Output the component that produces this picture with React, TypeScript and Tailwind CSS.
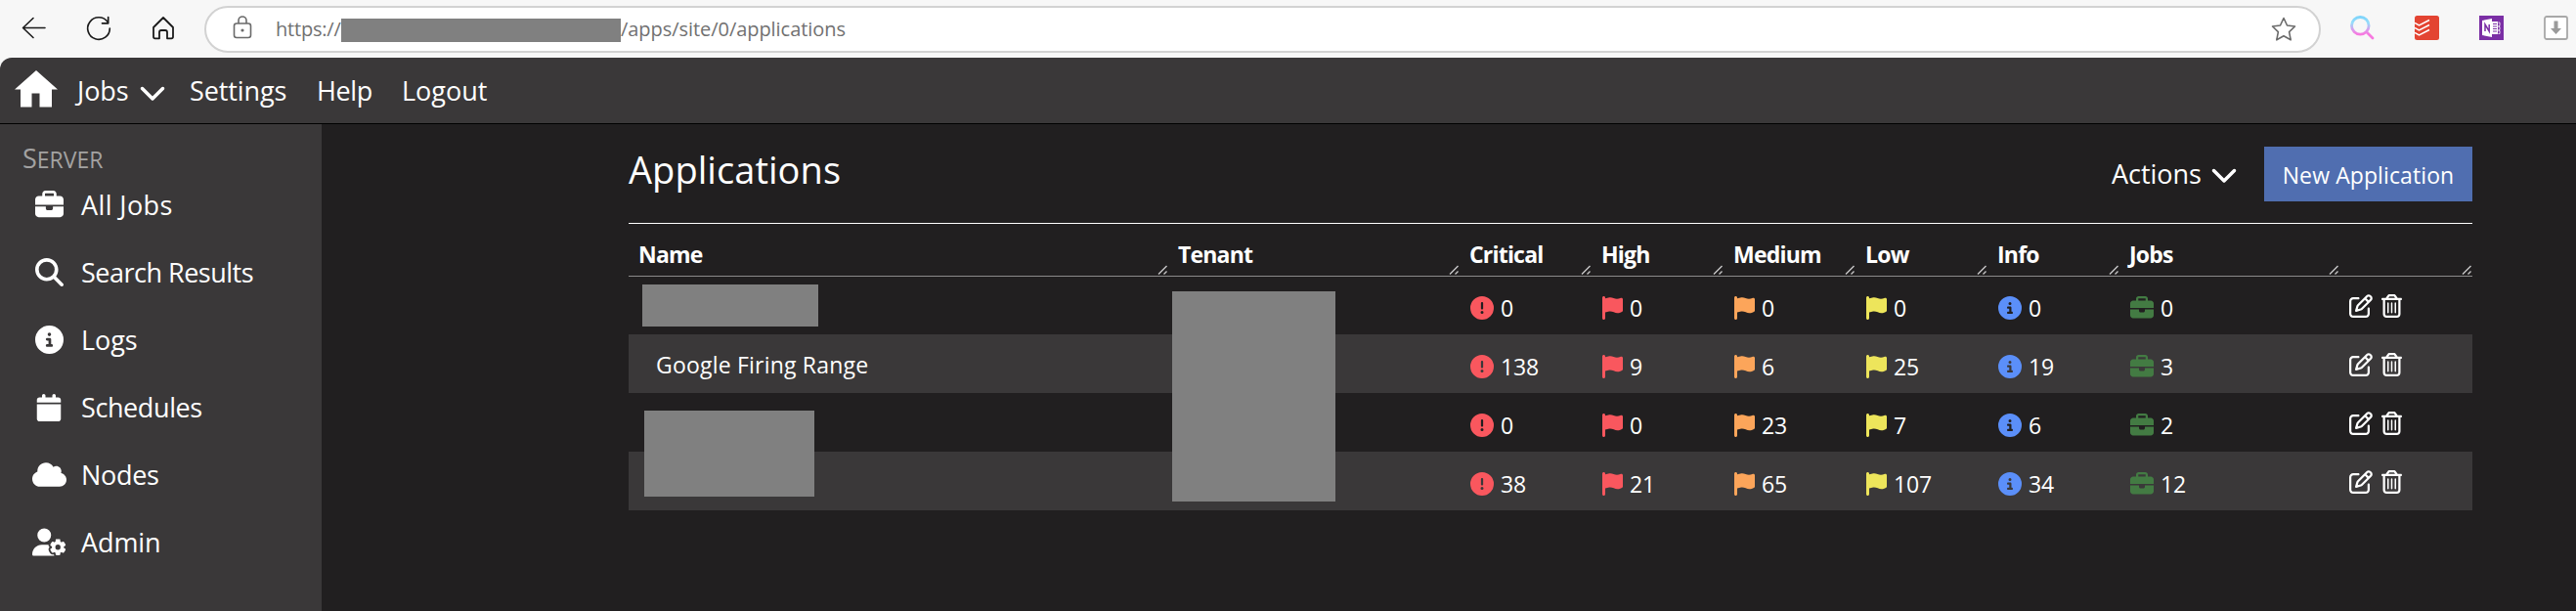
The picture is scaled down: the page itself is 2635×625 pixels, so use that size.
import {
  FaBriefcase,
  FaCalendar,
  FaChevronDown,
  FaCircleExclamation,
  FaCircleInfo,
  FaCloud,
  FaFlag,
  FaMagnifyingGlass,
  FaRegPenToSquare,
  FaRegTrashCan,
  FaUserGear,
} from 'react-icons/fa6';

const links = [
  { label: 'All Jobs', icon: FaBriefcase, size: 'size-[29px]', text: 'tracking-[0.4px]' },
  { label: 'Search Results', icon: FaMagnifyingGlass, size: 'size-[29px]', text: 'tracking-[-0.5px]' },
  { label: 'Logs', icon: FaCircleInfo, size: 'size-[29px]', text: 'tracking-[-0.1px]' },
  { label: 'Schedules', icon: FaCalendar, size: 'size-[28px]', text: 'tracking-[-0.4px]' },
  { label: 'Nodes', icon: FaCloud, size: 'size-[35px]', text: 'tracking-[-0.3px]' },
  { label: 'Admin', icon: FaUserGear, size: 'size-[35px]', text: 'tracking-[-0.1px]' },
];

const columns = ['Name', 'Tenant', 'Critical', 'High', 'Medium', 'Low', 'Info', 'Jobs', ''];

const rows = [
  { name: '', critical: 0, high: 0, medium: 0, low: 0, info: 0, jobs: 0 },
  { name: 'Google Firing Range', critical: 138, high: 9, medium: 6, low: 25, info: 19, jobs: 3 },
  { name: '', critical: 0, high: 0, medium: 23, low: 7, info: 6, jobs: 2 },
  { name: '', critical: 38, high: 21, medium: 65, low: 107, info: 34, jobs: 12 },
];

const grid = 'grid grid-cols-[552px_298px_135px_135px_135px_135px_135px_225px_136px]';
const cell = 'flex items-center gap-[7px] pt-[6px] pl-[11px] tracking-[-0.2px]';

function BrowserBar() {
  return (
    <div className="flex h-[59px] items-center bg-[#f7f7f7]">
      <svg className="ml-[21px] size-7" viewBox="0 0 28 28" fill="none" stroke="#1b1b1b" strokeWidth="1.6" strokeLinecap="round" strokeLinejoin="round">
        <path d="M25 12.500H2.500M13 2.500L2.500 12.500L13 22.500" />
      </svg>
      <svg className="ml-[38px] size-7" viewBox="0 0 28 28" fill="none" stroke="#1b1b1b" strokeWidth="1.700" strokeLinecap="round" strokeLinejoin="round">
        <path d="M23.200 6.500A11.300 11.300 0 1 0 25.300 13M23.700 1.500V7.800H17.500" />
      </svg>
      <svg className="ml-[38px] size-7" viewBox="0 0 28 28" fill="none" stroke="#1b1b1b" strokeWidth="1.800" strokeLinejoin="round">
        <path d="M4 12L14 2L24 12V21.500Q24 23.300 22.200 23.300H18V17Q18 15 16 15H12Q10 15 10 17V23.300H5.800Q4 23.300 4 21.500Z" />
      </svg>
      <div className="ml-[28px] flex h-[48px] w-[2165px] items-center rounded-full border-2 border-[#d2d2d2] bg-white text-[20px] text-[#717171]">
        <svg className="mb-[3px] ml-[25px] size-6" viewBox="0 0 24 24" fill="none" stroke="#6a6a6a" strokeWidth="1.600">
          <rect x="3.500" y="8" width="17" height="14.500" rx="2.500" />
          <path d="M8 8V5a4 4 0 0 1 8 0V8" />
          <circle cx="12" cy="15" r="0.800" fill="#6a6a6a" />
        </svg>
        <span className="ml-[22px] w-[67px] tracking-[-0.2px]">https://</span>
        <div className="mt-[3px] h-6 w-[286px] bg-[#808080]" />
        <span className="tracking-[-0.05px]">/apps/site/0/applications</span>
        <svg className="mr-[22px] ml-auto size-7" viewBox="0 0 28 28" fill="none" stroke="#6a6a6a" strokeWidth="1.600" strokeLinejoin="round">
          <path d="M14 2.500L17.500 10L25.500 11L19.600 16.600L21.200 24.800L14 20.800L6.800 24.800L8.400 16.600L2.500 11L10.500 10Z" />
        </svg>
      </div>
      <svg className="mb-[2px] ml-[30px] size-[25px]" viewBox="0 0 25 25" fill="none" stroke="url(#lens)" strokeWidth="2.800" strokeLinecap="round">
        <defs>
          <linearGradient id="lens" x1="0" y1="0" x2="0" y2="25" gradientUnits="userSpaceOnUse">
            <stop offset="0" stopColor="#7ad3fb" />
            <stop offset="0.300" stopColor="#96ddfb" />
            <stop offset="0.550" stopColor="#d3a2ee" />
            <stop offset="0.750" stopColor="#f779e0" />
            <stop offset="1" stopColor="#f779e0" />
          </linearGradient>
        </defs>
        <circle cx="10.300" cy="10.300" r="8.800" />
        <path d="M17 17L23 23" />
      </svg>
      <svg className="mb-[2px] ml-[41px] size-[25px]" viewBox="0 0 25 25" fill="none" stroke="#fff" strokeWidth="1.500">
        <rect width="25" height="25" rx="2.500" fill="#e34432" stroke="none" />
        <path d="M0 7.500L4.500 10L15 4.500M0 12.500L4.500 15L15 9.500M0 17.500L4.500 20L15 14.500" />
      </svg>
      <svg className="mb-[2px] ml-[41px] size-[25px]" viewBox="0 0 25 25" fill="none">
        <rect width="25" height="25" fill="#7b2fa5" />
        <path d="M3 5L13 3V22L3 20Z" fill="#fff" />
        <path d="M6 16V9L10.200 16V9" stroke="#7b2fa5" strokeWidth="1.500" />
        <path d="M13 6H19V19H13Z" fill="#fff" />
        <path d="M14 8.500H18M14 11H18M14 13.500H18M14 16H18" stroke="#7b2fa5" strokeWidth="1" />
        <path d="M19.500 7H21V10.500H19.500M19.500 11.500H21V14.500H19.500M19.500 15.500H21V18.500H19.500" stroke="#fff" strokeWidth="0.800" />
      </svg>
      <svg className="mb-[2px] ml-[41px] size-[25px]" viewBox="0 0 25 25" fill="none">
        <rect x="1" y="1" width="23" height="23" rx="2" fill="#fff" stroke="#a8a8a8" strokeWidth="1.800" />
        <path d="M10.500 5.500H14.500V13H18L12.500 19L7 13H10.500Z" fill="#9a9a9a" />
      </svg>
    </div>
  );
}

function Navbar() {
  return (
    <nav className="flex h-[68px] items-center rounded-tl-xl border-b border-black bg-[#3a3839] pt-[2px] text-[27px] text-white">
      <svg className="mb-[5px] ml-[15px] h-[38px] w-11" viewBox="0 0 44 38" fill="#fff">
        <path d="M22 0L44 19.500H38V37.500H25.500V23.500H17.500V37.500H6V19.500H0Z" />
      </svg>
      <span className="ml-[20px] w-[57px] tracking-[-0.1px]">Jobs</span>
      <FaChevronDown className="ml-[6px] size-7" />
      <span className="ml-[24px] w-[107px] tracking-[-0.1px]">Settings</span>
      <span className="ml-[23px] w-[62px] tracking-[-0.4px]">Help</span>
      <span className="ml-[25px]">Logout</span>
    </nav>
  );
}

function Sidebar() {
  return (
    <aside className="w-[329px] bg-[#3a3839] pt-[18px] text-[27px] text-white">
      <h2 className="h-[31px] pl-[23px] leading-[34px] text-[#a3a2a2]">
        S<span className="text-[23px]">ERVER</span>
      </h2>
      <ul>
        {links.map(({ label, icon: Icon, size, text }) => (
          <li key={label} className="flex h-[69px] items-center">
            <span className="mb-[2px] ml-[32px] flex w-9 justify-center">
              <Icon className={size} />
            </span>
            <span className={`ml-[15px] ${text}`}>{label}</span>
          </li>
        ))}
      </ul>
    </aside>
  );
}

// resize handle in the corner of a header cell
function Grip() {
  return (
    <svg className="absolute right-px bottom-px size-[10px]" viewBox="0 0 10 10" stroke="#c8c8c8" strokeWidth="1.400">
      <path d="M1 9.500L9.500 1M6.500 9.500L9.500 6.500" />
    </svg>
  );
}

export default function App() {
  return (
    <div className="flex h-[625px] w-[2635px] flex-col overflow-hidden bg-[#f7f7f7] font-['Open_Sans',sans-serif]">
      <BrowserBar />
      <Navbar />
      <div className="flex flex-1 bg-[#211f20]">
        <Sidebar />
        <main className="ml-[314px] w-[1886px] text-white">
          <div className="flex h-[102px] items-center border-b border-white">
            <h1 className="mb-[8px] text-[38px] tracking-[0.05px]">Applications</h1>
            <span className="mt-[2px] ml-auto text-[27px]">Actions</span>
            <FaChevronDown className="ml-[9px] size-7" />
            <button className="ml-[27px] h-14 w-[213px] bg-[#506eb0] pt-[3px] text-[23px] tracking-[0.1px]">
              New Application
            </button>
          </div>
          <div className={`${grid} h-[54px] border-b border-[#8b8a8a] text-[23px] font-bold`}>
            {columns.map((name, i) => (
              <div key={i} className="relative flex items-center pt-[10px] pl-[10px] tracking-[-0.8px]">
                {name}
                <Grip />
              </div>
            ))}
          </div>
          <div className="relative -mt-px text-[23px]">
            {rows.map((row, i) => (
              <div key={i} className={`${grid} h-[60px] items-center even:bg-[#3a3839]`}>
                <div className="pt-[3px] pl-[28px] tracking-[0.2px]">{row.name}</div>
                <div />
                <div className={cell}>
                  <FaCircleExclamation className="size-6 text-[#f9575e]" />
                  {row.critical}
                </div>
                <div className={cell}>
                  <FaFlag className="h-6 w-[21px] text-[#f9575e]" />
                  {row.high}
                </div>
                <div className={cell}>
                  <FaFlag className="h-6 w-[21px] text-[#fca55a]" />
                  {row.medium}
                </div>
                <div className={cell}>
                  <FaFlag className="h-6 w-[21px] text-[#ede55b]" />
                  {row.low}
                </div>
                <div className={cell}>
                  <FaCircleInfo className="size-6 text-[#5b8ff9]" />
                  {row.info}
                </div>
                <div className={cell}>
                  <FaBriefcase className="size-6 text-[#437b43]" />
                  {row.jobs}
                </div>
                <div className="flex items-center gap-[9px] pt-[2px] pl-[10px]">
                  <FaRegPenToSquare className="size-6" />
                  <FaRegTrashCan className="h-6 w-[21px]" />
                </div>
              </div>
            ))}
            <div className="absolute top-[9px] left-[14px] h-[43px] w-[180px] bg-[#808080]" />
            <div className="absolute top-[138px] left-[16px] h-[88px] w-[174px] bg-[#808080]" />
            <div className="absolute top-[16px] left-[556px] h-[215px] w-[167px] bg-[#808080]" />
          </div>
        </main>
      </div>
    </div>
  );
}
